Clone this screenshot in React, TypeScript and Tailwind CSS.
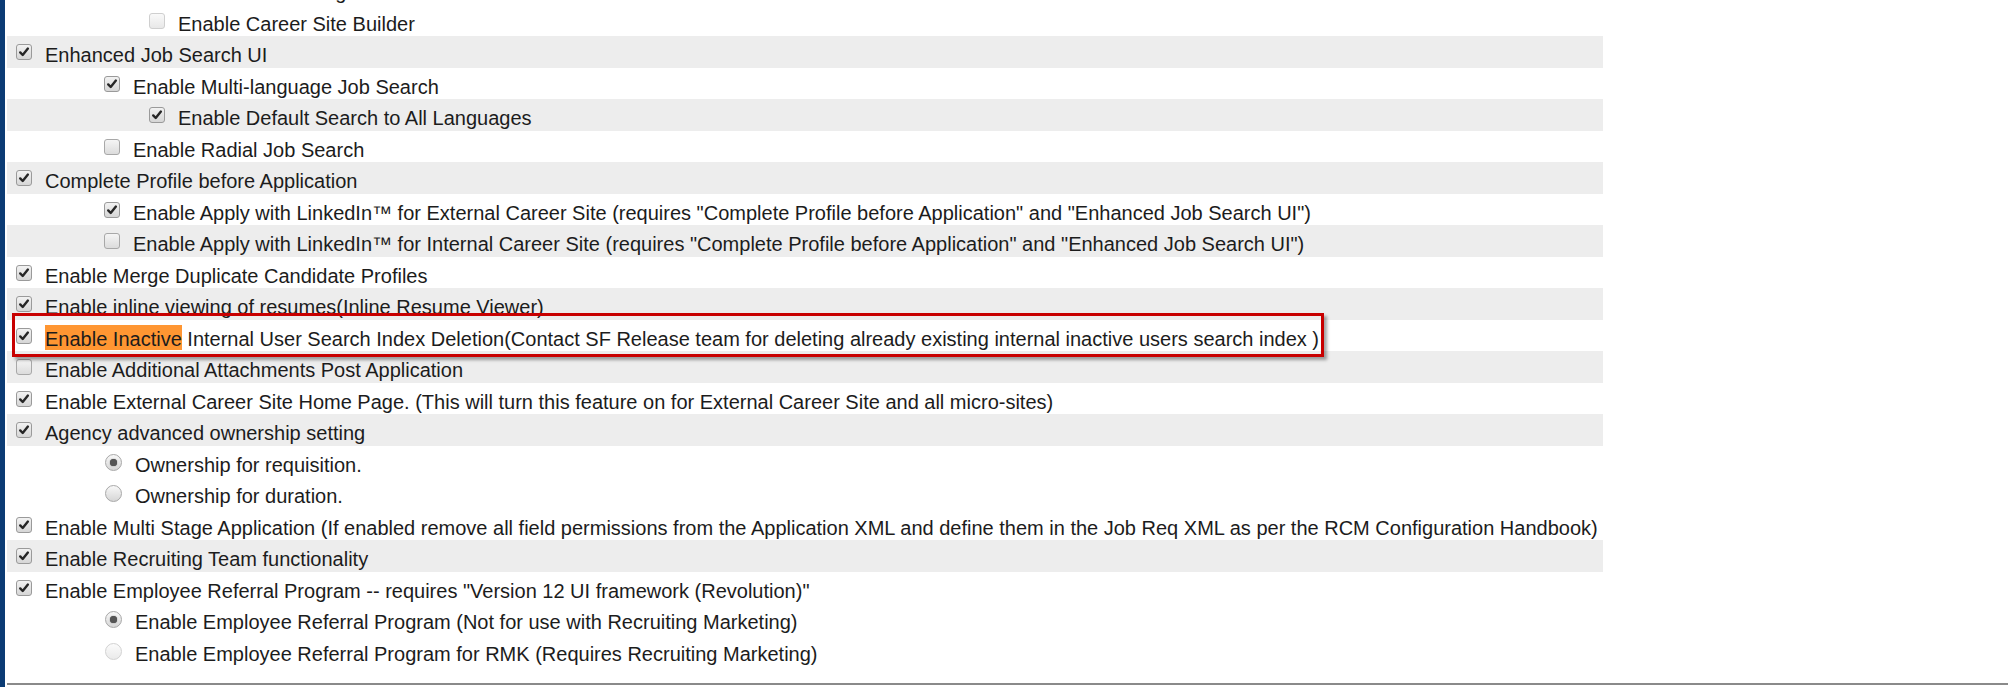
import React from "react";

type Row = {
  kind: "cb" | "radio";
  lvl?: 0 | 1 | 2;
  checked: boolean;
  disabled?: boolean;
  gray?: boolean;
  text?: string;
  special?: boolean;
};

const rows: Row[] = [
  { kind: "cb", lvl: 1, checked: false, text: "Enable Job Alert Settings" },
  { kind: "cb", lvl: 2, checked: false, disabled: true, text: "Enable Career Site Builder" },
  { kind: "cb", lvl: 0, checked: true, gray: true, text: "Enhanced Job Search UI" },
  { kind: "cb", lvl: 1, checked: true, text: "Enable Multi-language Job Search" },
  { kind: "cb", lvl: 2, checked: true, gray: true, text: "Enable Default Search to All Languages" },
  { kind: "cb", lvl: 1, checked: false, text: "Enable Radial Job Search" },
  { kind: "cb", lvl: 0, checked: true, gray: true, text: "Complete Profile before Application" },
  {
    kind: "cb",
    lvl: 1,
    checked: true,
    text: 'Enable Apply with LinkedIn\u2122 for External Career Site (requires "Complete Profile before Application" and "Enhanced Job Search UI")',
  },
  {
    kind: "cb",
    lvl: 1,
    checked: false,
    gray: true,
    text: 'Enable Apply with LinkedIn\u2122 for Internal Career Site (requires "Complete Profile before Application" and "Enhanced Job Search UI")',
  },
  { kind: "cb", lvl: 0, checked: true, text: "Enable Merge Duplicate Candidate Profiles" },
  { kind: "cb", lvl: 0, checked: true, gray: true, text: "Enable inline viewing of resumes(Inline Resume Viewer)" },
  { kind: "cb", lvl: 0, checked: true, special: true },
  { kind: "cb", lvl: 0, checked: false, gray: true, text: "Enable Additional Attachments Post Application" },
  {
    kind: "cb",
    lvl: 0,
    checked: true,
    text: "Enable External Career Site Home Page. (This will turn this feature on for External Career Site and all micro-sites)",
  },
  { kind: "cb", lvl: 0, checked: true, gray: true, text: "Agency advanced ownership setting" },
  { kind: "radio", checked: true, text: "Ownership for requisition." },
  { kind: "radio", checked: false, text: "Ownership for duration." },
  {
    kind: "cb",
    lvl: 0,
    checked: true,
    text: "Enable Multi Stage Application (If enabled remove all field permissions from the Application XML and define them in the Job Req XML as per the RCM Configuration Handbook)",
  },
  { kind: "cb", lvl: 0, checked: true, gray: true, text: "Enable Recruiting Team functionality" },
  {
    kind: "cb",
    lvl: 0,
    checked: true,
    text: 'Enable Employee Referral Program -- requires "Version 12 UI framework (Revolution)"',
  },
  { kind: "radio", checked: true, text: "Enable Employee Referral Program (Not for use with Recruiting Marketing)" },
  {
    kind: "radio",
    checked: false,
    disabled: true,
    text: "Enable Employee Referral Program for RMK (Requires Recruiting Marketing)",
  },
];

function CheckBox({ checked, disabled }: { checked: boolean; disabled?: boolean }) {
  if (checked) {
    return (
      <span className="mt-[8px] flex h-[16px] w-[16px] shrink-0 items-center justify-center rounded-[3px] border border-[#9a9a9a] bg-linear-to-b from-[#f2f2f2] to-[#d6d6d6]">
        <svg width="12" height="12" viewBox="0 0 12 12">
          <path d="M2.2 6.4 L4.7 9 L9.9 2.6" fill="none" stroke="#262626" strokeWidth="2.4" strokeLinecap="round" strokeLinejoin="round" />
        </svg>
      </span>
    );
  }
  if (disabled) {
    return (
      <span className="mt-[8px] h-[16px] w-[16px] shrink-0 rounded-[3px] border border-[#cfcfcf] bg-linear-to-b from-[#f9f9f9] to-[#e8e8e8]" />
    );
  }
  return (
    <span className="mt-[8px] h-[16px] w-[16px] shrink-0 rounded-[3px] border border-[#a8a8a8] bg-linear-to-b from-[#f5f5f5] to-[#dcdcdc]" />
  );
}

function Radio({ checked, disabled }: { checked: boolean; disabled?: boolean }) {
  if (disabled) {
    return (
      <span className="mt-[8px] h-[17px] w-[17px] shrink-0 rounded-full border border-[#d2d2d2] bg-linear-to-b from-[#fbfbfb] to-[#eaeaea]" />
    );
  }
  return (
    <span className="mt-[8px] flex h-[17px] w-[17px] shrink-0 items-center justify-center rounded-full border border-[#a8a8a8] bg-linear-to-b from-[#f8f8f8] to-[#d6d6d6]">
      {checked && <span className="h-[7px] w-[7px] rounded-full bg-[#555555] shadow-[0_0_1px_#333]" />}
    </span>
  );
}

const lvlPad: Record<number, string> = {
  0: "pl-[9px]",
  1: "pl-[97px]",
  2: "pl-[142px]",
};

function RowView({ row }: { row: Row }) {
  const bg = row.gray ? "bg-[#ededed]" : "bg-white";
  if (row.kind === "radio") {
    return (
      <div className={`relative flex h-[31.5px] w-[1596px] items-start pl-[98px] ${bg}`}>
        <Radio checked={row.checked} disabled={row.disabled} />
        <span className="ml-[13px] mt-[8px] whitespace-nowrap leading-[22px]">{row.text}</span>
      </div>
    );
  }
  return (
    <div className={`relative flex h-[31.5px] w-[1596px] items-start ${lvlPad[row.lvl ?? 0]} ${bg}`}>
      <CheckBox checked={row.checked} disabled={row.disabled} />
      {row.special ? (
        <span className="ml-[13px] mt-[8px] whitespace-nowrap leading-[22px]">
          <span className="bg-[#ff9632] pt-[3px]">Enable Inactive</span> Internal User Search Index Deletion(Contact SF
          Release team for deleting already existing internal inactive users search index )
        </span>
      ) : (
        <span className="ml-[13px] mt-[8px] whitespace-nowrap leading-[22px]">{row.text}</span>
      )}
      {row.special && (
        <div className="pointer-events-none absolute left-[5px] top-[-6.5px] z-10 h-[44px] w-[1312px] border-[3px] border-[#c80000] shadow-[3px_3px_3px_rgba(0,0,0,0.35)]" />
      )}
    </div>
  );
}

export default function App() {
  return (
    <div className="flex min-h-[687px] w-[2008px] overflow-hidden bg-white font-['Liberation_Sans',Arial,sans-serif] text-[20px] text-[#1c1c1c]">
      <div className="w-[5px] shrink-0 bg-[#0b3b74]" />
      <div className="ml-[2px] flex flex-1 flex-col">
        <div className="mt-[-27px] flex flex-col">
          {rows.map((r, i) => (
            <RowView key={i} row={r} />
          ))}
        </div>
        <div className="mt-[17px] h-[2px] bg-[#8a8a8a]" />
      </div>
    </div>
  );
}
